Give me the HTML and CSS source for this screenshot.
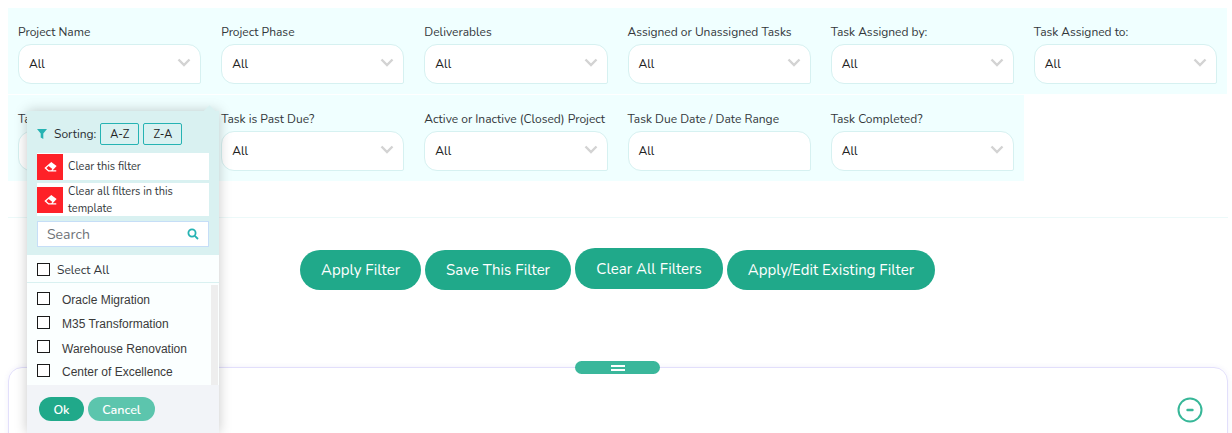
FILE: index.html
```html
<!DOCTYPE html>
<html lang="en">
<head>
<meta charset="utf-8">
<title>Filters</title>
<link rel="stylesheet" href="styles.css">
</head>
<body>
<main class="page">
  <section class="filters">
    <div class="cell"><label class="label">Project Name</label><div class="select"><span>All</span><svg class="chev" viewBox="0 0 14 9"><path d="M1.5 1.5 7 7l5.5-5.5"/></svg></div></div>
    <div class="cell"><label class="label">Project Phase</label><div class="select"><span>All</span><svg class="chev" viewBox="0 0 14 9"><path d="M1.5 1.5 7 7l5.5-5.5"/></svg></div></div>
    <div class="cell"><label class="label">Deliverables</label><div class="select"><span>All</span><svg class="chev" viewBox="0 0 14 9"><path d="M1.5 1.5 7 7l5.5-5.5"/></svg></div></div>
    <div class="cell"><label class="label">Assigned or Unassigned Tasks</label><div class="select"><span>All</span><svg class="chev" viewBox="0 0 14 9"><path d="M1.5 1.5 7 7l5.5-5.5"/></svg></div></div>
    <div class="cell"><label class="label">Task Assigned by:</label><div class="select"><span>All</span><svg class="chev" viewBox="0 0 14 9"><path d="M1.5 1.5 7 7l5.5-5.5"/></svg></div></div>
    <div class="cell"><label class="label">Task Assigned to:</label><div class="select"><span>All</span><svg class="chev" viewBox="0 0 14 9"><path d="M1.5 1.5 7 7l5.5-5.5"/></svg></div></div>
    <div class="cell"><label class="label">Task Type</label><div class="select"><span>All</span><svg class="chev" viewBox="0 0 14 9"><path d="M1.5 1.5 7 7l5.5-5.5"/></svg></div></div>
    <div class="cell"><label class="label">Task is Past Due?</label><div class="select"><span>All</span><svg class="chev" viewBox="0 0 14 9"><path d="M1.5 1.5 7 7l5.5-5.5"/></svg></div></div>
    <div class="cell"><label class="label">Active or Inactive (Closed) Project</label><div class="select"><span>All</span><svg class="chev" viewBox="0 0 14 9"><path d="M1.5 1.5 7 7l5.5-5.5"/></svg></div></div>
    <div class="cell"><label class="label">Task Due Date / Date Range</label><div class="select"><span>All</span></div></div>
    <div class="cell"><label class="label">Task Completed?</label><div class="select"><span>All</span><svg class="chev" viewBox="0 0 14 9"><path d="M1.5 1.5 7 7l5.5-5.5"/></svg></div></div>
  </section>
  <hr class="rule">
  <div class="actions">
    <button class="btn">Apply Filter</button>
    <button class="btn">Save This Filter</button>
    <button class="btn btn-raised">Clear All Filters</button>
    <button class="btn btn-last">Apply/Edit Existing Filter</button>
  </div>
  <section class="panel">
    <div class="handle"><span class="handle-bars"></span></div>
    <svg class="collapse" viewBox="0 0 26 26"><circle cx="13" cy="13" r="11.5"/><path d="M10.5 13h5"/></svg>
  </section>
</main>

<aside class="popup">
  <div class="popup-head">
    <div class="sorting">
      <svg class="funnel" viewBox="0 0 10 10"><path d="M0 0h10L6.3 4.6V10L3.7 8.4V4.6z"/></svg>
      <span class="sorting-label">Sorting:</span>
      <button class="sort">A-Z</button>
      <button class="sort">Z-A</button>
    </div>
    <div class="clear clear-one">
      <span class="eraser"><svg viewBox="0 0 14 12"><path fill-rule="evenodd" d="M7.8.6 13.6 5 9.4 9.6h3.8v1.2H4.6L.4 7zM5 5 2.6 7l2.6 2.4h2.6L9 8.2z"/></svg></span>
      <span class="clear-text">Clear this filter</span>
    </div>
    <div class="clear clear-all">
      <span class="eraser"><svg viewBox="0 0 14 12"><path fill-rule="evenodd" d="M7.8.6 13.6 5 9.4 9.6h3.8v1.2H4.6L.4 7zM5 5 2.6 7l2.6 2.4h2.6L9 8.2z"/></svg></span>
      <span class="clear-text">Clear all filters in this template</span>
    </div>
    <div class="search">
      <span class="search-text">Search</span>
      <svg class="search-icon" viewBox="0 0 12 12"><circle cx="5" cy="5" r="3.6"/><path d="m7.8 7.8 3.2 3.2"/></svg>
    </div>
  </div>
  <div class="select-all"><span class="check"></span><span class="select-all-text">Select All</span></div>
  <div class="list">
    <div class="item"><span class="check"></span><span class="item-text">Oracle Migration</span></div>
    <div class="item"><span class="check"></span><span class="item-text">M35 Transformation</span></div>
    <div class="item"><span class="check"></span><span class="item-text item-text-low">Warehouse Renovation</span></div>
    <div class="item"><span class="check"></span><span class="item-text">Center of Excellence</span></div>
    <span class="track"></span>
  </div>
  <div class="popup-foot">
    <button class="foot-btn ok">Ok</button>
    <button class="foot-btn cancel">Cancel</button>
  </div>
</aside>
</body>
</html>
```

FILE: styles.css
```css
* { box-sizing: border-box; }
html, body { margin: 0; height: 433px; overflow: hidden; background: #fff; }
body { font-family: "Nunito", "Noto Sans", "Open Sans", sans-serif; color: #2c2f33; position: relative; }
button { font-family: inherit; cursor: pointer; }

.page { padding: 8px 4px 0 8px; height: 433px; overflow: hidden; }

.filters { display: grid; grid-template-columns: repeat(6, 1fr); grid-auto-rows: 86px; row-gap: 1px; margin-right: 1px; }
.cell { background: #f0ffff; padding: 15px 10px 0; }
.label { display: block; font-size: 12px; line-height: 18px; white-space: nowrap; color: #33373b; }
.select { margin-top: 3px; height: 40px; background: #fff; border: 1px solid #d6f1f1; border-radius: 13px 13px 2px 13px; display: flex; align-items: center; justify-content: space-between; padding: 0 9px 0 10px; font-size: 12px; color: #222; }
.chev { width: 14px; height: 9px; margin-top: -3px; fill: none; stroke: #d3d3d3; stroke-width: 2.4; }

.rule { border: 0; border-top: 1px solid #ecf9f9; margin: 36px 0 0; }

.actions { display: flex; justify-content: center; align-items: flex-start; gap: 4px; margin-top: 32px; padding-right: 1px; height: 40px; }
.btn { height: 40px; padding: 0 21px; border: 0; border-radius: 20px; background: #20a98a; color: #fff; font-size: 15px; white-space: nowrap; }
.btn-raised { margin-top: -2px; height: 41px; width: 148px; padding: 0; }
.btn-last { width: 208px; padding: 0; }

.panel { margin-top: 77px; height: 120px; border: 1px solid #e2dffb; border-radius: 14px; position: relative; box-shadow: 0 0 5px rgba(120,110,220,.1); }
.handle { position: absolute; top: -7px; left: 566px; width: 85px; height: 13px; border-radius: 7px; background: #3ab79b; display: flex; align-items: center; justify-content: center; }
.handle-bars { width: 14px; height: 6px; border-top: 2px solid #fff; border-bottom: 2px solid #fff; }
.collapse { position: absolute; top: 29px; right: 24px; width: 26px; height: 26px; fill: none; stroke: #37b798; stroke-width: 2; }
.collapse path { stroke-width: 2.4; stroke-linecap: round; }

.popup { position: absolute; left: 27px; top: 111px; width: 192px; height: 322px; background: #fbffff; box-shadow: 0 0 12px rgba(0,0,0,.22); display: flex; flex-direction: column; }
.popup::before { content: ""; position: absolute; right: 5px; top: -4px; width: 9px; height: 9px; background: #d9f1f1; transform: rotate(45deg); }
.popup-head { position: relative; height: 144px; background: #d9f1f1; padding: 12px 10px 0; }
.sorting { display: flex; align-items: center; height: 22px; }
.funnel { width: 10px; height: 10px; fill: #26b3b3; margin-right: 7px; }
.sorting-label { font-size: 12px; margin-right: 4px; }
.sort { width: 39px; height: 22px; padding: 0; margin-right: 4px; background: #d9f1f1; border: 1px solid #26b3b3; border-radius: 2px; font-size: 11px; color: #222; }
.clear { background: #fff; display: flex; align-items: center; width: 172px; font-size: 11px; color: #33373b; }
.clear-one { height: 27px; margin-top: 8px; }
.clear-all { height: 33px; margin-top: 3px; }
.eraser { flex: none; width: 26px; height: 26px; background: #fe2128; display: flex; align-items: center; justify-content: center; }
.eraser svg { width: 13px; height: 12px; fill: #fff; }
.clear-text { padding-left: 5px; line-height: 17px; }
.search { margin-top: 5px; width: 172px; height: 26px; background: #fff; border: 1px solid #c6def7; display: flex; align-items: center; justify-content: space-between; padding: 0 9px; font-size: 14px; color: #6f7378; }
.search-text { padding-top: 1px; }
.search-icon { width: 12px; height: 12px; fill: none; stroke: #26b3b3; stroke-width: 1.8; }
.select-all { height: 28px; flex: none; border-bottom: 1px solid #d9f1f1; display: flex; align-items: center; padding: 1px 0 0 10px; gap: 7px; font-size: 12px; color: #33373b; }
.select-all-text { padding-top: 2px; }
.check { flex: none; width: 13px; height: 13px; border: 1px solid #1a1a1a; background: #fff; }
.list { position: relative; height: 102px; flex: none; padding: 9px 0 0 10px; }
.item { height: 24px; display: flex; align-items: flex-start; gap: 12px; }
.item-text { font-family: "Liberation Sans", sans-serif; font-size: 12px; line-height: 14px; color: #3a3a3a; padding-top: 1px; }
.item-text-low { padding-top: 2px; }
.track { position: absolute; right: 1px; top: 2px; width: 7px; height: 100px; background: #eeeeee; }
.popup-foot { flex: 1; background: #f2f4f8; padding: 12px 0 0 12px; display: flex; gap: 4px; align-items: flex-start; }
.foot-btn { height: 24px; border: 0; border-radius: 12px; color: #fff; font-size: 12.5px; font-weight: 600; padding: 0; }
.ok { width: 45px; background: #20a98a; }
.cancel { width: 67px; background: #5cc5ad; }
```
